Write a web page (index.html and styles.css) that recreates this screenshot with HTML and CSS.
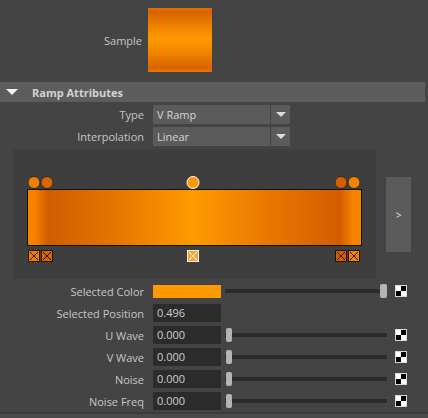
FILE: index.html
```html
<!DOCTYPE html>
<html>
<head>
<meta charset="utf-8">
<link rel="stylesheet" href="styles.css">
</head>
<body>
<div class="sample-row">
  <span class="label sample-label">Sample</span>
  <div class="sample-swatch"></div>
</div>

<div class="header">
  <span class="tri"></span>
  <span class="header-text">Ramp Attributes</span>
</div>

<div class="row dd-row">
  <span class="label">Type</span>
  <div class="dropdown">V Ramp</div>
  <div class="dd-arrow"><span class="dd-tri"></span></div>
</div>
<div class="row dd-row">
  <span class="label">Interpolation</span>
  <div class="dropdown">Linear</div>
  <div class="dd-arrow"><span class="dd-tri"></span></div>
</div>

<div class="ramp-area">
  <div class="ramp-panel">
    <div class="marker-row">
      <span class="dot" style="left:2.1%;background:#f27d00"></span>
      <span class="dot" style="left:6%;background:#d86700"></span>
      <span class="dot sel" style="left:49.6%;background:#ff9900"></span>
      <span class="dot" style="left:93.7%;background:#d35f00"></span>
      <span class="dot" style="left:97.6%;background:#f58200"></span>
    </div>
    <div class="ramp-bar"></div>
    <div class="marker-row sq-row">
      <span class="sq" style="left:2.1%;background:#f27d00"><svg viewBox="0 0 12 12" width="12" height="12"><rect x="0.5" y="0.5" width="11" height="11" fill="none" stroke="#2a1200"/><path d="M2 2L10 10M10 2L2 10" stroke="#2a1200" stroke-width="1"/></svg></span>
      <span class="sq" style="left:6%;background:#d86700"><svg viewBox="0 0 12 12" width="12" height="12"><rect x="0.5" y="0.5" width="11" height="11" fill="none" stroke="#2a1200"/><path d="M2 2L10 10M10 2L2 10" stroke="#2a1200" stroke-width="1"/></svg></span>
      <span class="sq" style="left:49.6%;background:#f4a63c"><svg viewBox="0 0 12 12" width="12" height="12"><rect x="0.5" y="0.5" width="11" height="11" fill="none" stroke="#fff6e0"/><path d="M2 2L10 10M10 2L2 10" stroke="#fff6e0" stroke-width="1"/></svg></span>
      <span class="sq" style="left:93.7%;background:#d35f00"><svg viewBox="0 0 12 12" width="12" height="12"><rect x="0.5" y="0.5" width="11" height="11" fill="none" stroke="#2a1200"/><path d="M2 2L10 10M10 2L2 10" stroke="#2a1200" stroke-width="1"/></svg></span>
      <span class="sq" style="left:97.6%;background:#f58200"><svg viewBox="0 0 12 12" width="12" height="12"><rect x="0.5" y="0.5" width="11" height="11" fill="none" stroke="#2a1200"/><path d="M2 2L10 10M10 2L2 10" stroke="#2a1200" stroke-width="1"/></svg></span>
    </div>
  </div>
  <div class="expand-btn">&gt;</div>
</div>

<div class="row attr-row">
  <span class="label">Selected Color</span>
  <div class="color-field"></div>
  <div class="slider end"><span class="handle"></span></div>
  <span class="checker"><i class="w"></i><i class="b"></i><i class="b"></i><i class="w"></i></span>
</div>
<div class="row attr-row">
  <span class="label">Selected Position</span>
  <div class="field">0.496</div>
</div>
<div class="row attr-row">
  <span class="label">U Wave</span>
  <div class="field">0.000</div>
  <div class="slider"><span class="handle"></span></div>
  <span class="checker"><i class="w"></i><i class="b"></i><i class="b"></i><i class="w"></i></span>
</div>
<div class="row attr-row">
  <span class="label">V Wave</span>
  <div class="field">0.000</div>
  <div class="slider"><span class="handle"></span></div>
  <span class="checker"><i class="w"></i><i class="b"></i><i class="b"></i><i class="w"></i></span>
</div>
<div class="row attr-row">
  <span class="label">Noise</span>
  <div class="field">0.000</div>
  <div class="slider"><span class="handle"></span></div>
  <span class="checker"><i class="w"></i><i class="b"></i><i class="b"></i><i class="w"></i></span>
</div>
<div class="row attr-row">
  <span class="label">Noise Freq</span>
  <div class="field">0.000</div>
  <div class="slider"><span class="handle"></span></div>
  <span class="checker"><i class="w"></i><i class="b"></i><i class="b"></i><i class="w"></i></span>
</div>
<div class="footer"></div>
</body>
</html>
```

FILE: styles.css
```css
html, body {
  margin: 0;
  padding: 0;
  background: #444444;
  height: 418px;
  overflow: hidden;
}
body {
  font-family: "Open Sans", "DejaVu Sans", sans-serif;
  font-size: 11px;
  color: #c8c8c8;
}
.label {
  width: 144px;
  flex: 0 0 144px;
  text-align: right;
  white-space: nowrap;
  color: #c6c6c6;
}
.sample-row {
  display: flex;
  align-items: center;
  padding-top: 8px;
  height: 64px;
}
.sample-label {
  width: 142px;
  flex: 0 0 142px;
}
.sample-swatch {
  margin-left: 6px;
  width: 64px;
  height: 64px;
  background: linear-gradient(to bottom, #e26f00 0%, #d86300 6%, #f08400 30%, #ff9900 48%, #f08400 70%, #d86300 94%, #e87a00 100%);
}
.header {
  margin-top: 10px;
  width: 425px;
  height: 20px;
  background: #5d5d5d;
  display: flex;
  align-items: center;
}
.tri {
  margin-left: 6px;
  width: 0;
  height: 0;
  border-left: 6px solid transparent;
  border-right: 6px solid transparent;
  border-top: 6px solid #f2f2f2;
}
.header-text {
  margin-left: 14px;
  font-weight: bold;
  color: #d2d2d2;
}
.row {
  display: flex;
  align-items: center;
}
.dd-row {
  margin-top: 3px;
  height: 19px;
}
.dropdown {
  margin-left: 9px;
  width: 113px;
  height: 19px;
  line-height: 19px;
  padding-left: 4px;
  background: #5b5b5b;
  color: #d4d4d4;
}
.dd-arrow {
  margin-left: 1px;
  width: 19px;
  height: 19px;
  background: #5b5b5b;
  display: flex;
  align-items: center;
  justify-content: center;
}
.dd-tri {
  width: 0;
  height: 0;
  border-left: 5px solid transparent;
  border-right: 5px solid transparent;
  border-top: 5px solid #dcdcdc;
}
.ramp-area {
  margin-top: 3px;
  display: flex;
  align-items: flex-start;
}
.ramp-panel {
  margin-left: 13px;
  width: 363px;
  height: 130px;
  background: #3e3e3e;
  padding-top: 28px;
  box-sizing: border-box;
}
.marker-row {
  position: relative;
  margin-left: 14px;
  width: 335px;
  height: 12px;
}
.dot {
  position: absolute;
  top: -1px;
  width: 13px;
  height: 13px;
  border-radius: 50%;
  border: 1px solid #2c2c2c;
  box-sizing: border-box;
  transform: translateX(-50%);
}
.dot.sel {
  border-color: #ffffff;
}
.ramp-bar {
  margin-left: 14px;
  width: 335px;
  height: 57px;
  box-sizing: border-box;
  border: 1px solid #111;
  background: linear-gradient(to right, #f78200 0%, #f78200 2.1%, #cf5d00 6%, #e47400 25%, #ff9a00 49.6%, #e87800 72%, #d35c00 93.7%, #f88300 97.6%, #f88300 100%);
}
.sq-row {
  margin-top: 4px;
}
.sq {
  position: absolute;
  top: 0;
  width: 12px;
  height: 12px;
  transform: translateX(-50%);
  display: flex;
}
.expand-btn {
  margin-left: 10px;
  margin-top: 28px;
  width: 25px;
  height: 75px;
  background: #5b5b5b;
  color: #e0e0e0;
  font-size: 10px;
  display: flex;
  align-items: center;
  justify-content: center;
}
.attr-row {
  height: 22px;
}
.ramp-area + .attr-row {
  margin-top: 1px;
}
.color-field {
  margin-left: 9px;
  width: 68px;
  height: 13px;
  background: #ff9900;
}
.field {
  margin-left: 9px;
  width: 64px;
  height: 18px;
  line-height: 18px;
  padding-left: 4px;
  background: #2b2b2b;
  color: #cfcfcf;
  border-radius: 1px;
}
.slider {
  margin-left: 4px;
  width: 162px;
  height: 14px;
  display: flex;
  align-items: center;
  background: linear-gradient(to bottom, transparent 5px, #2b2b2b 5px, #2b2b2b 9px, transparent 9px);
}
.slider.end {
  justify-content: flex-end;
}
.slider .handle {
  margin-left: 1px;
  width: 6px;
  height: 14px;
  border-radius: 2px;
  background: #b4b4b4;
}
.slider.end .handle {
  margin-left: 0;
  width: 7px;
}
.checker {
  margin-left: 8px;
  width: 12px;
  height: 12px;
  box-sizing: border-box;
  border: 1px solid #d8d8d8;
  display: grid;
  grid-template-columns: 5px 5px;
  grid-template-rows: 5px 5px;
}
.checker i {
  display: block;
}
.checker .w { background: #ffffff; }
.checker .b { background: #000000; }
.footer {
  height: 10px;
  border-top: 2px solid #3b3b3b;
  background: #4a4a4a;
}
```
